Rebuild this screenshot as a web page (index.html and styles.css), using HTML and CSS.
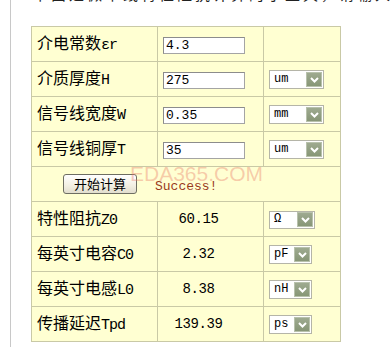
FILE: index.html
```html
<!DOCTYPE html>
<html lang="zh-CN">
<head>
<meta charset="utf-8">
<title>微带线特性阻抗计算</title>
<link rel="stylesheet" href="styles.css">
</head>
<body>
<div class="page">
  <div class="intro"><p>下面是微带线特性阻抗计算的小工具，请输入参数</p></div>
  <table class="calc">
    <colgroup><col class="c1"><col class="c2"><col class="c3"></colgroup>
    <tr>
      <td class="lbl">介电常数<span class="en">εr</span></td>
      <td class="inp"><input class="field" type="text" value="4.3"></td>
      <td class="opt"></td>
    </tr>
    <tr>
      <td class="lbl">介质厚度<span class="en">H</span></td>
      <td class="inp"><input class="field" type="text" value="275"></td>
      <td class="opt"><div class="sel sel-wide"><span class="sel-text">um</span><span class="sel-btn"><svg width="9" height="6" viewBox="0 0 9 6"><path d="M1 1 L4.5 4.5 L8 1" fill="none" stroke="#fff" stroke-width="2"/></svg></span></div></td>
    </tr>
    <tr>
      <td class="lbl">信号线宽度<span class="en">W</span></td>
      <td class="inp"><input class="field" type="text" value="0.35"></td>
      <td class="opt"><div class="sel sel-wide"><span class="sel-text">mm</span><span class="sel-btn"><svg width="9" height="6" viewBox="0 0 9 6"><path d="M1 1 L4.5 4.5 L8 1" fill="none" stroke="#fff" stroke-width="2"/></svg></span></div></td>
    </tr>
    <tr>
      <td class="lbl">信号线铜厚<span class="en">T</span></td>
      <td class="inp"><input class="field" type="text" value="35"></td>
      <td class="opt"><div class="sel sel-wide"><span class="sel-text">um</span><span class="sel-btn"><svg width="9" height="6" viewBox="0 0 9 6"><path d="M1 1 L4.5 4.5 L8 1" fill="none" stroke="#fff" stroke-width="2"/></svg></span></div></td>
    </tr>
    <tr>
      <td class="act" colspan="3"><div class="act-row"><button class="btn" type="button">开始计算</button><span class="msg">Success!</span></div></td>
    </tr>
    <tr>
      <td class="lbl">特性阻抗<span class="en">Z0</span></td>
      <td class="val">60.15</td>
      <td class="opt"><div class="sel sel-mid"><span class="sel-text">Ω</span><span class="sel-btn"><svg width="9" height="6" viewBox="0 0 9 6"><path d="M1 1 L4.5 4.5 L8 1" fill="none" stroke="#fff" stroke-width="2"/></svg></span></div></td>
    </tr>
    <tr>
      <td class="lbl">每英寸电容<span class="en">C0</span></td>
      <td class="val">2.32</td>
      <td class="opt"><div class="sel sel-small"><span class="sel-text">pF</span><span class="sel-btn"><svg width="9" height="6" viewBox="0 0 9 6"><path d="M1 1 L4.5 4.5 L8 1" fill="none" stroke="#fff" stroke-width="2"/></svg></span></div></td>
    </tr>
    <tr>
      <td class="lbl">每英寸电感<span class="en">L0</span></td>
      <td class="val">8.38</td>
      <td class="opt"><div class="sel sel-small"><span class="sel-text">nH</span><span class="sel-btn"><svg width="9" height="6" viewBox="0 0 9 6"><path d="M1 1 L4.5 4.5 L8 1" fill="none" stroke="#fff" stroke-width="2"/></svg></span></div></td>
    </tr>
    <tr>
      <td class="lbl">传播延迟<span class="en">Tpd</span></td>
      <td class="val">139.39</td>
      <td class="opt"><div class="sel sel-small"><span class="sel-text">ps</span><span class="sel-btn"><svg width="9" height="6" viewBox="0 0 9 6"><path d="M1 1 L4.5 4.5 L8 1" fill="none" stroke="#fff" stroke-width="2"/></svg></span></div></td>
    </tr>
  </table>
  <div class="watermark">EDA365.COM</div>
</div>
</body>
</html>
```

FILE: styles.css
```css
html, body {
  margin: 0;
  padding: 0;
  background: #ffffff;
}

body {
  font-family: "Noto Sans CJK SC", "Liberation Sans", sans-serif;
  color: #000;
}

.page {
  position: relative;
  margin-left: 10px;
  border-left: 1px solid #c8c8c8;
  padding-left: 20px;
  min-height: 347px;
  box-sizing: border-box;
}

.intro {
  height: 6px;
  overflow: hidden;
}

.intro p {
  margin: -15px 0 0 2px;
  font-size: 15px;
  line-height: 18px;
  white-space: nowrap;
  color: #222;
  letter-spacing: 3px;
}

.calc {
  margin-top: 20px;
  table-layout: fixed;
  width: 310px;
  border-collapse: separate;
  border-spacing: 1px;
  background: #c9c9a6;
}

.c1 { width: 125px; }
.c2 { width: 105px; }
.c3 { width: 76px; }

.calc td {
  height: 34px;
  padding: 0;
  background: #ffffd2;
  vertical-align: middle;
}

.lbl {
  padding-left: 5px !important;
  font-size: 16px;
  line-height: 20px;
  white-space: nowrap;
}

.en {
  font-family: "Liberation Mono", monospace;
  font-size: 15px;
  letter-spacing: -1px;
}

.inp {
  padding-left: 5px !important;
}

.field {
  display: block;
  margin: 3px 0 0 0;
  width: 82px;
  height: 17px;
  box-sizing: border-box;
  border: 1px solid #a4a4a4;
  border-top-color: #8c8c8c;
  border-left-color: #8c8c8c;
  padding: 0 2px;
  background: #fff;
  font-family: "Liberation Mono", monospace;
  font-size: 13px;
  color: #000;
  outline: none;
}

.opt {
  padding-left: 5px !important;
}

.sel {
  display: flex;
  align-items: center;
  box-sizing: border-box;
  height: 19px;
  margin-top: 1px;
  padding: 1px;
  border: 1px solid #b5b5a8;
  background: #fff;
}

.sel-wide { width: 55px; }
.sel-mid { width: 46px; height: 18px; }
.sel-small { width: 43px; }

.sel-text {
  flex: 1;
  padding-left: 3px;
  font-family: "Liberation Mono", monospace;
  font-size: 12px;
  line-height: 15px;
  color: #000;
}

.sel-btn {
  display: flex;
  align-items: center;
  justify-content: center;
  box-sizing: border-box;
  width: 16px;
  height: 15px;
  background: linear-gradient(#9eaa90, #879676);
  border: 1px solid #b8c1ac;
}

.act {
  padding-left: 31px !important;
}

.act-row {
  display: flex;
  align-items: center;
}

.btn {
  width: 74px;
  height: 20px;
  padding: 0;
  box-sizing: border-box;
  border: 1px solid #6e6e62;
  border-radius: 3px;
  background: linear-gradient(#ffffff, #f2efe2 60%, #e2dece);
  font-family: "Noto Sans CJK SC", sans-serif;
  font-size: 13px;
  line-height: 16px;
  color: #000;
}

.msg {
  margin-left: 18px;
  margin-top: 4px;
  font-family: "Liberation Mono", monospace;
  font-size: 13px;
  color: #9a3a1c;
  position: relative;
  z-index: 2;
}

.val {
  text-align: center;
  padding-right: 24px !important;
  font-family: "Liberation Mono", monospace;
  font-size: 14px;
  letter-spacing: -0.4px;
}

.watermark {
  position: absolute;
  left: 119px;
  top: 163px;
  font-family: "Liberation Sans", sans-serif;
  font-size: 21px;
  line-height: 21px;
  color: rgba(232, 120, 100, 0.38);
  pointer-events: none;
  z-index: 1;
}
```
